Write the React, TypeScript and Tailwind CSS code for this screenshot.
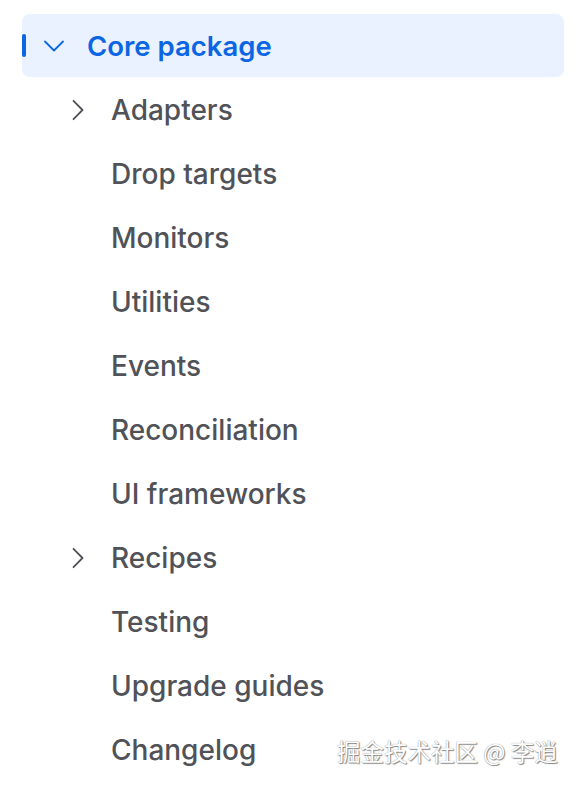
const children: { label: string; expandable?: boolean }[] = [
  { label: "Adapters", expandable: true },
  { label: "Drop targets" },
  { label: "Monitors" },
  { label: "Utilities" },
  { label: "Events" },
  { label: "Reconciliation" },
  { label: "UI frameworks" },
  { label: "Recipes", expandable: true },
  { label: "Testing" },
  { label: "Upgrade guides" },
  { label: "Changelog" },
];

function ChevronRight() {
  return (
    <svg width="14" height="22" viewBox="0 0 14 22" fill="none">
      <path d="M2.5 1.8 L11.5 11 L2.5 20.2" stroke="#505258" strokeWidth="1.8" strokeLinecap="round" strokeLinejoin="round" />
    </svg>
  );
}

function ChevronDown() {
  return (
    <svg width="22" height="14" viewBox="0 0 22 14" fill="none">
      <path d="M2 2.5 L11 11.5 L20 2.5" stroke="#0c66e4" strokeWidth="1.8" strokeLinecap="round" strokeLinejoin="round" />
    </svg>
  );
}

export default function App() {
  return (
    <div
      className="relative h-[792px] w-[580px] bg-white pl-[22px] pt-[14px]"
      style={{ fontFamily: "Inter, 'Noto Sans', sans-serif" }}
    >
      <div className="flex w-[542px] flex-col">
        {/* Parent */}
        <div className="relative flex h-[63px] items-center rounded-lg bg-[#e9f2fe]">
          <span className="absolute left-0 top-[20px] h-[23px] w-[4px] rounded-sm bg-[#0c66e4]" />
          <span className="ml-[21px] flex w-[22px] justify-center">
            <ChevronDown />
          </span>
          <span className="ml-[22px] mt-[2px] text-[27.5px] font-semibold text-[#0c66e4]">Core package</span>
        </div>

        {/* Children */}
        {children.map((c) => (
          <div key={c.label} className="flex h-[64px] items-center">
            <span className="ml-[49px] mt-[2px] flex w-[14px] justify-center">
              {c.expandable && <ChevronRight />}
            </span>
            <span className="ml-[26px] mt-[2px] text-[28px] font-medium text-[#505258]">{c.label}</span>
          </div>
        ))}
      </div>

      <div
        className="absolute left-[337px] top-[734px] text-[23.5px] text-white"
        style={{
          fontFamily: "'Noto Sans CJK SC', sans-serif",
          textShadow: "0 0 1px #777, 1px 1px 1px #888",
        }}
      >
        掘金技术社区 @ 李逍
      </div>
    </div>
  );
}
